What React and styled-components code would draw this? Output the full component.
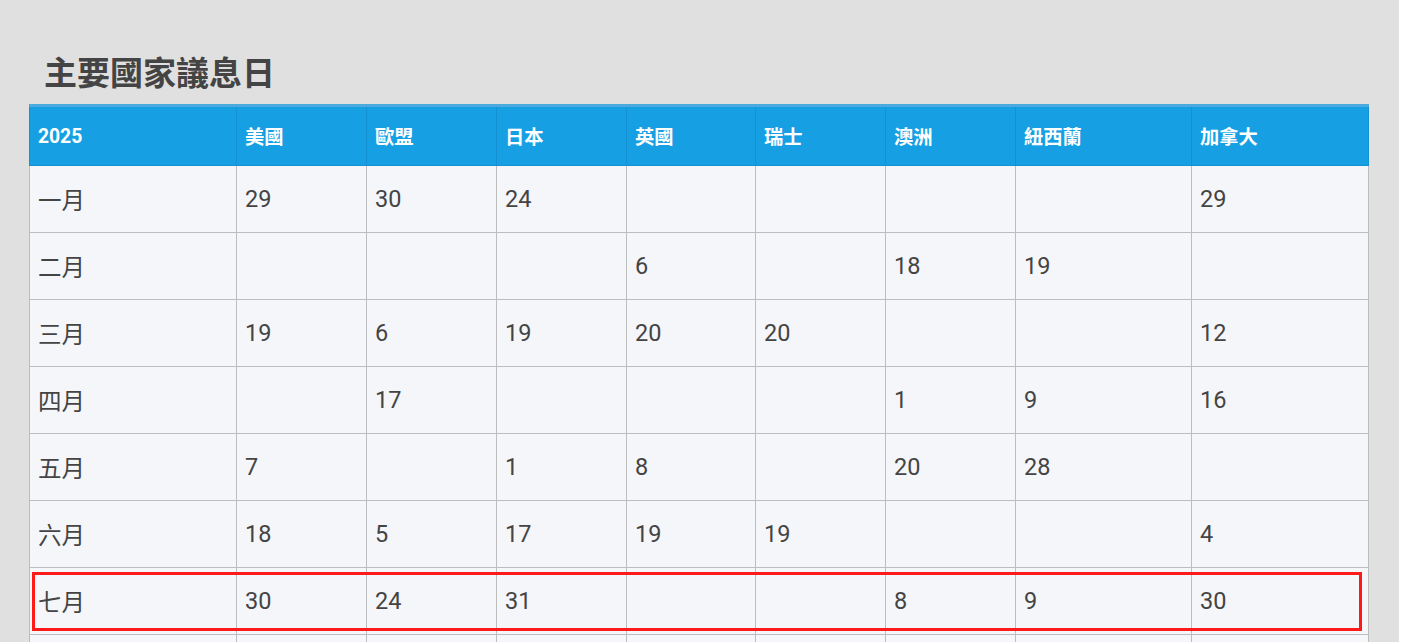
import React from "react";
import styled, { createGlobalStyle } from "styled-components";

const GlobalStyle = createGlobalStyle`
  html, body { margin: 0; padding: 0; background: #ffffff; }
  body { font-family: Roboto, "Noto Sans CJK TC", "Noto Sans", sans-serif; color: #444; }
`;

const Page = styled.div`
  width: 1399px;
  min-height: 642px;
  background: #e0e0e0;
  padding: 53px 0 0 29px;
  box-sizing: border-box;
  overflow: hidden;
`;

const Title = styled.h2`
  margin: 0 0 10px 0;
  padding-left: 15px;
  font-family: Roboto, "Noto Sans CJK TC", sans-serif;
  font-weight: 700;
  font-size: 33px;
  line-height: 41px;
  color: #444;
`;

const TableWrap = styled.div`
  position: relative;
  width: 1339px;
`;

const Table = styled.table`
  border-collapse: collapse;
  table-layout: fixed;
  width: 1339px;
  background: #f5f6fa;
  border-top: 3px solid #4aa9dd;
`;

const HeadCell = styled.th`
  background: #179fe3;
  color: #ffffff;
  font-weight: 700;
  font-size: 19.3px;
  text-align: left;
  padding: 0 8px;
  height: 58px;
  border: 1px solid #1590d3;
  border-top: none;
  vertical-align: middle;
`;

const Cell = styled.td`
  font-size: 23.5px;
  color: #444;
  padding: 0 8px;
  height: 66px;
  border: 1px solid #bdbdbd;
  vertical-align: middle;
  white-space: nowrap;
`;

const Highlight = styled.div`
  position: absolute;
  left: 3px;
  top: ${(p) => p.$top}px;
  width: 1330px;
  height: 59px;
  border: 3px solid #ff1a1a;
  box-sizing: border-box;
  pointer-events: none;
`;

const widths = [207, 130, 130, 130, 129, 130, 130, 176, 177];
const headers = ["2025", "美國", "歐盟", "日本", "英國", "瑞士", "澳洲", "紐西蘭", "加拿大"];
const rows = [
  ["一月", "29", "30", "24", "", "", "", "", "29"],
  ["二月", "", "", "", "6", "", "18", "19", ""],
  ["三月", "19", "6", "19", "20", "20", "", "", "12"],
  ["四月", "", "17", "", "", "", "1", "9", "16"],
  ["五月", "7", "", "1", "8", "", "20", "28", ""],
  ["六月", "18", "5", "17", "19", "19", "", "", "4"],
  ["七月", "30", "24", "31", "", "", "8", "9", "30"],
  ["", "", "", "", "", "", "", "", ""],
];

export default function App() {
  return (
    <>
      <GlobalStyle />
      <Page>
        <Title>主要國家議息日</Title>
        <TableWrap>
          <Table>
            <colgroup>
              {widths.map((w, i) => (
                <col key={i} style={{ width: w }} />
              ))}
            </colgroup>
            <thead>
              <tr>
                {headers.map((h) => (
                  <HeadCell key={h}>{h}</HeadCell>
                ))}
              </tr>
            </thead>
            <tbody>
              {rows.map((r, ri) => (
                <tr key={ri}>
                  {r.map((c, i) => (
                    <Cell key={i}>{c}</Cell>
                  ))}
                </tr>
              ))}
            </tbody>
          </Table>
          <Highlight $top={468} />
        </TableWrap>
      </Page>
    </>
  );
}
